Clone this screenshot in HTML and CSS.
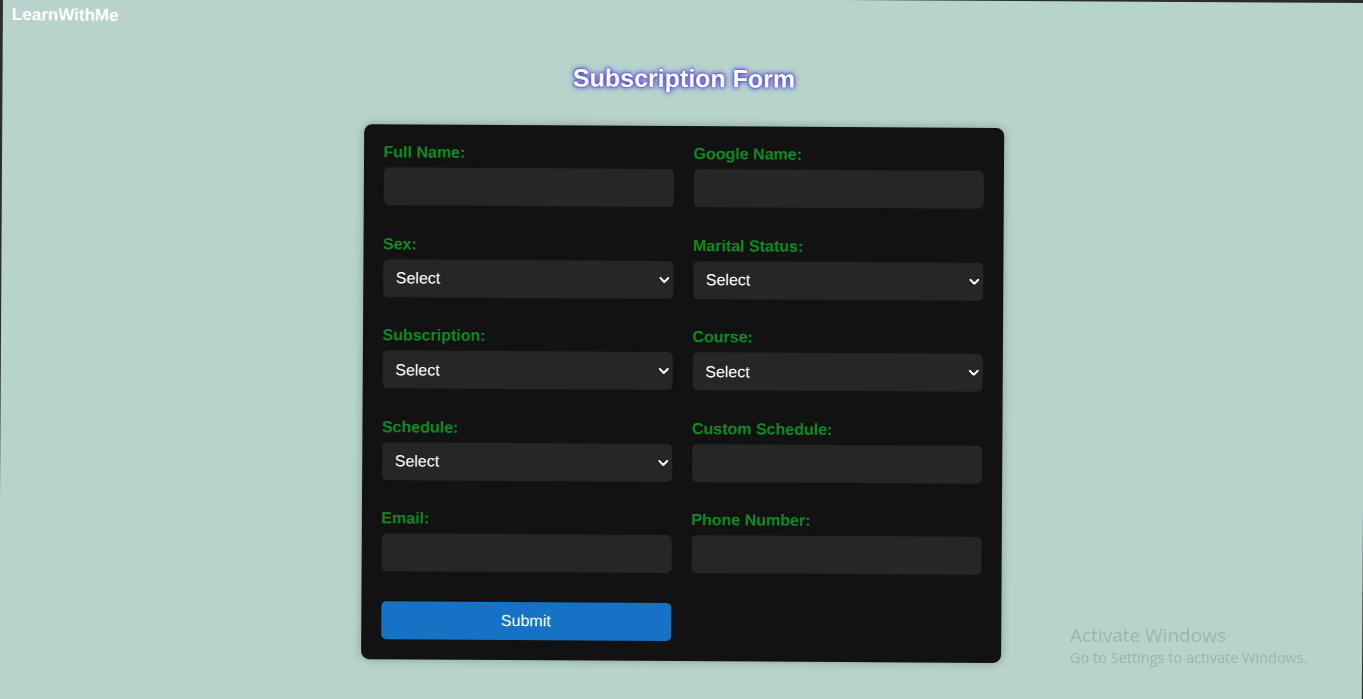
FILE: index.html
```html
<!DOCTYPE html>
<html lang="en">
<head>
<meta charset="utf-8">
<title>Subscription Form</title>
<link rel="stylesheet" href="styles.css">
</head>
<body>
<div class="page">
  <header class="brand">LearnWithMe</header>
  <h1 class="title">Subscription Form</h1>
  <form class="card">
    <div class="field">
      <label>Full Name:</label>
      <input type="text">
    </div>
    <div class="field">
      <label>Google Name:</label>
      <input type="text">
    </div>
    <div class="field">
      <label>Sex:</label>
      <div class="select-wrap">
        <select><option>Select</option></select>
        <svg class="chev" viewBox="0 0 10 6" width="10" height="6"><path d="M1 1l4 4 4-4" fill="none" stroke="#fff" stroke-width="2" stroke-linecap="round" stroke-linejoin="round"/></svg>
      </div>
    </div>
    <div class="field">
      <label>Marital Status:</label>
      <div class="select-wrap">
        <select><option>Select</option></select>
        <svg class="chev" viewBox="0 0 10 6" width="10" height="6"><path d="M1 1l4 4 4-4" fill="none" stroke="#fff" stroke-width="2" stroke-linecap="round" stroke-linejoin="round"/></svg>
      </div>
    </div>
    <div class="field">
      <label>Subscription:</label>
      <div class="select-wrap">
        <select><option>Select</option></select>
        <svg class="chev" viewBox="0 0 10 6" width="10" height="6"><path d="M1 1l4 4 4-4" fill="none" stroke="#fff" stroke-width="2" stroke-linecap="round" stroke-linejoin="round"/></svg>
      </div>
    </div>
    <div class="field">
      <label>Course:</label>
      <div class="select-wrap">
        <select><option>Select</option></select>
        <svg class="chev" viewBox="0 0 10 6" width="10" height="6"><path d="M1 1l4 4 4-4" fill="none" stroke="#fff" stroke-width="2" stroke-linecap="round" stroke-linejoin="round"/></svg>
      </div>
    </div>
    <div class="field">
      <label>Schedule:</label>
      <div class="select-wrap">
        <select><option>Select</option></select>
        <svg class="chev" viewBox="0 0 10 6" width="10" height="6"><path d="M1 1l4 4 4-4" fill="none" stroke="#fff" stroke-width="2" stroke-linecap="round" stroke-linejoin="round"/></svg>
      </div>
    </div>
    <div class="field">
      <label>Custom Schedule:</label>
      <input type="text">
    </div>
    <div class="field">
      <label>Email:</label>
      <input type="email">
    </div>
    <div class="field">
      <label>Phone Number:</label>
      <input type="tel">
    </div>
    <button type="button" class="submit">Submit</button>
  </form>
</div>
<div class="activate">
  <div class="act-title">Activate Windows</div>
  <div class="act-sub">Go to Settings to activate Windows.</div>
</div>
</body>
</html>
```
FILE: styles.css
```css
html, body {
  margin: 0;
  padding: 0;
  height: 100%;
  overflow: hidden;
  background: #2b2d2d;
}

.page {
  width: 1363px;
  height: 720px;
  background: #b6d3cc;
  transform-origin: 0 0;
  transform: translate(3px, -5px) rotate(0.34deg);
  font-family: "Liberation Sans", Arial, sans-serif;
  overflow: hidden;
}

.brand {
  padding: 10px 9px;
  font-size: 17px;
  line-height: 20px;
  font-weight: bold;
  color: #ffffff;
}

.title {
  margin: 24px 0 0;
  text-align: center;
  font-size: 25px;
  line-height: 30px;
  font-weight: bold;
  color: #ffffff;
  text-shadow: 0 0 2px #3a2fc4, 0 0 4px #4a3fd4, 0 0 6px #6a60e0;
}

.card {
  width: 640px;
  box-sizing: border-box;
  margin: 33px auto 0;
  padding: 19px 20px 20px;
  background: #121212;
  border-radius: 8px;
  box-shadow: 0 0 10px rgba(0, 0, 0, 0.25);
  display: grid;
  grid-template-columns: 1fr 1fr;
  column-gap: 20px;
  row-gap: 29.6px;
}

.field {
  display: flex;
  flex-direction: column;
  gap: 6px;
}

.field label {
  font-size: 16px;
  line-height: 18px;
  font-weight: bold;
  color: #0c8a1e;
}

.field input,
.field select {
  display: block;
  width: 100%;
  height: 38px;
  box-sizing: border-box;
  border: none;
  border-radius: 5px;
  background: #262626;
  color: #ffffff;
  font-family: "Liberation Sans", Arial, sans-serif;
  font-size: 16px;
  padding: 0 12px;
  outline: none;
}

.field select {
  appearance: none;
  -webkit-appearance: none;
  padding-left: 13px;
}

.select-wrap {
  position: relative;
}

.chev {
  position: absolute;
  right: 4px;
  top: 16px;
  pointer-events: none;
}

.submit {
  grid-column: 1;
  height: 38px;
  border: none;
  border-radius: 5px;
  background: #1572c4;
  color: #ffffff;
  font-family: "Liberation Sans", Arial, sans-serif;
  font-size: 16px;
}

.activate {
  position: fixed;
  left: 1070px;
  top: 623px;
  font-family: "Open Sans", "Noto Sans", sans-serif;
  color: #9fb4ae;
}

.act-title {
  font-size: 19px;
  line-height: 25px;
}

.act-sub {
  font-size: 14.5px;
  line-height: 20px;
}
```
